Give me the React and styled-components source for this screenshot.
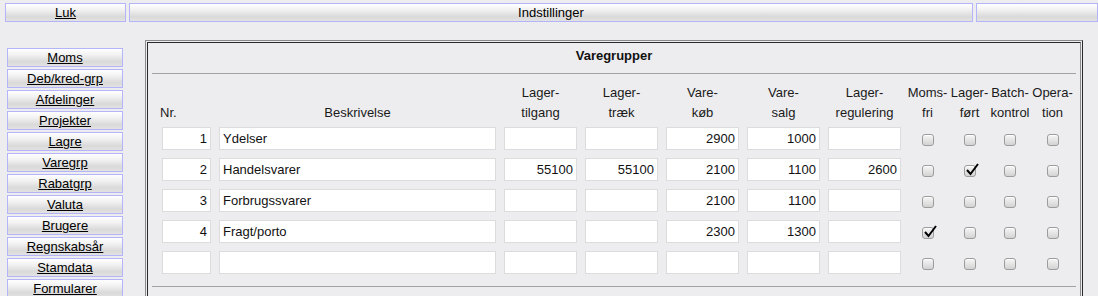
import React from "react";
import styled, { createGlobalStyle } from "styled-components";

const GlobalStyle = createGlobalStyle`
  html, body {
    margin: 0;
    padding: 0;
    background: #ededef;
    font-family: "Liberation Sans", Arial, sans-serif;
    font-size: 13px;
    color: #111;
  }
`;

const Page = styled.div`
  width: 1098px;
  height: 296px;
  overflow: hidden;
`;

const TopBar = styled.div`
  display: flex;
  gap: 3px;
  padding: 3px 0 0 5px;
`;

const BarButton = styled.div`
  box-sizing: border-box;
  width: ${(p) => p.$w}px;
  height: 19px;
  border: 1px solid #b4b4fa;
  background: linear-gradient(
    to bottom,
    #ffffff 0%,
    #f1f1f1 35%,
    #d9d9d9 75%,
    #e2e2e2 100%
  );
  display: flex;
  align-items: center;
  justify-content: center;
  line-height: 17px;
  color: #000;
  text-decoration: ${(p) => (p.$link ? "underline" : "none")};
`;

const Main = styled.div`
  display: flex;
  margin-top: 18px;
`;

const SideMenu = styled.div`
  display: flex;
  flex-direction: column;
  gap: 2px;
  padding: 8px 0 0 7px;
  width: 116px;
  margin-right: 22px;
`;

const MenuButton = styled(BarButton)`
  width: 116px;
`;

const Outer = styled.div`
  box-sizing: border-box;
  width: 938px;
  padding: 1px;
  border: 1px solid;
  border-color: #8a8a8a #2a2a2a #2a2a2a #8a8a8a;
`;

const Inner = styled.div`
  border: 1px solid;
  border-color: #2a2a2a #8a8a8a #8a8a8a #2a2a2a;
  padding-bottom: 20px;
`;

const Title = styled.div`
  text-align: center;
  font-weight: bold;
  line-height: 16px;
  padding-top: 5px;
`;

const Rule = styled.div`
  margin: ${(p) => p.$top}px 4px 0 4px;
  border-top: 1px solid #a2a2a2;
`;

const Table = styled.div`
  padding: 9px 0 0 10px;
`;

const Row = styled.div`
  display: grid;
  grid-template-columns: 57px 285px 81px 81px 81px 81px 81px 45px 39px 42px 43px;
  align-items: center;
  margin-top: ${(p) => p.$mt || 0}px;
`;

const Head = styled.div`
  line-height: 20px;
  text-align: ${(p) => (p.$left ? "left" : "center")};
  padding-left: ${(p) => (p.$left ? 2 : 0)}px;
  align-self: end;
  white-space: nowrap;
  color: #1a1a1a;
`;

const Cell = styled.div`
  padding: 0 4px;
`;

const Field = styled.div`
  box-sizing: border-box;
  height: 23px;
  background: #fff;
  border: 1px solid #dcdcdc;
  padding: 0 3px;
  line-height: 21px;
  text-align: ${(p) => (p.$right ? "right" : "left")};
  color: #111;
`;

const CheckCell = styled.div`
  display: flex;
  justify-content: center;
  padding-top: 2px;
`;

const Box = styled.span`
  position: relative;
  box-sizing: border-box;
  width: 12px;
  height: 12px;
  border: 1px solid #9c9c9c;
  border-radius: 3px;
  background: linear-gradient(to bottom, #f6f6f6, #d3d3d3);
  box-shadow: inset 0 1px 0 #fff;
`;

const Tick = styled.svg`
  position: absolute;
  left: 1px;
  top: -4px;
`;

const Check = ({ on }) => (
  <CheckCell>
    <Box>
      {on ? (
        <Tick width="13" height="14" viewBox="0 0 13 14">
          <path d="M1 8 L4.5 12 L12 2" fill="none" stroke="#000" strokeWidth="2" />
        </Tick>
      ) : null}
    </Box>
  </CheckCell>
);

const menu = [
  "Moms",
  "Deb/kred-grp",
  "Afdelinger",
  "Projekter",
  "Lagre",
  "Varegrp",
  "Rabatgrp",
  "Valuta",
  "Brugere",
  "Regnskabsår",
  "Stamdata",
  "Formularer",
];

const rows = [
  { nr: "1", name: "Ydelser", v: ["", "", "2900", "1000", ""], c: [false, false, false, false] },
  { nr: "2", name: "Handelsvarer", v: ["55100", "55100", "2100", "1100", "2600"], c: [false, true, false, false] },
  { nr: "3", name: "Forbrugssvarer", v: ["", "", "2100", "1100", ""], c: [false, false, false, false] },
  { nr: "4", name: "Fragt/porto", v: ["", "", "2300", "1300", ""], c: [true, false, false, false] },
  { nr: "", name: "", v: ["", "", "", "", ""], c: [false, false, false, false] },
];

const heads = [
  ["Lager-", "tilgang"],
  ["Lager-", "træk"],
  ["Vare-", "køb"],
  ["Vare-", "salg"],
  ["Lager-", "regulering"],
  ["Moms-", "fri"],
  ["Lager-", "ført"],
  ["Batch-", "kontrol"],
  ["Opera-", "tion"],
];

export default function App() {
  return (
    <Page>
      <GlobalStyle />
      <TopBar>
        <BarButton $w={121} $link>
          Luk
        </BarButton>
        <BarButton $w={844}>Indstillinger</BarButton>
        <BarButton $w={122} />
      </TopBar>
      <Main>
        <SideMenu>
          {menu.map((m) => (
            <MenuButton key={m} $link>
              {m}
            </MenuButton>
          ))}
        </SideMenu>
        <Outer>
          <Inner>
            <Title>Varegrupper</Title>
            <Rule $top={9} />
            <Table>
              <Row>
                <Head $left>Nr.</Head>
                <Head>Beskrivelse</Head>
                {heads.map((h, i) => (
                  <Head key={i}>
                    {h[0]}
                    <br />
                    {h[1]}
                  </Head>
                ))}
              </Row>
              {rows.map((r, i) => (
                <Row key={i} $mt={i === 0 ? 4 : 8}>
                  <Cell>
                    <Field $right>{r.nr}</Field>
                  </Cell>
                  <Cell>
                    <Field>{r.name}</Field>
                  </Cell>
                  {r.v.map((v, j) => (
                    <Cell key={j}>
                      <Field $right>{v}</Field>
                    </Cell>
                  ))}
                  {r.c.map((c, j) => (
                    <Check key={j} on={c} />
                  ))}
                </Row>
              ))}
            </Table>
            <Rule $top={12} />
          </Inner>
        </Outer>
      </Main>
    </Page>
  );
}
